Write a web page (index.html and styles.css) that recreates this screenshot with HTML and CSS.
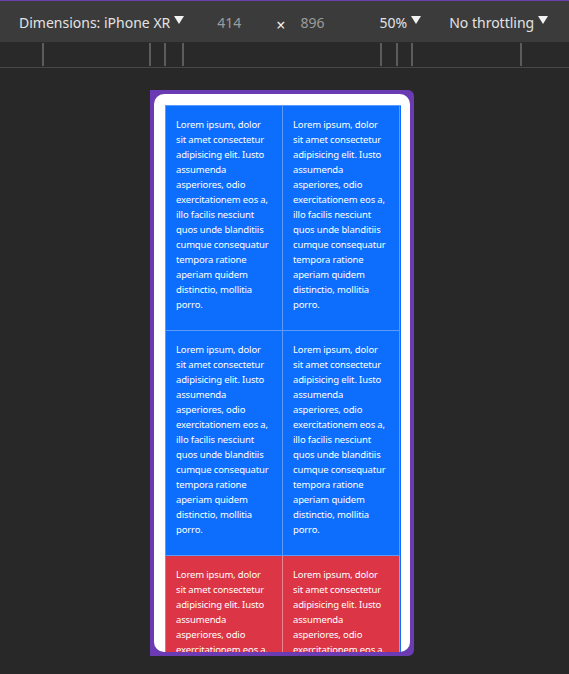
FILE: index.html
```html
<!DOCTYPE html>
<html>
<head>
<meta charset="utf-8">
<link rel="stylesheet" href="styles.css">
</head>
<body>
<div class="topline"></div>
<div class="toolbar">
  <span class="item dims">Dimensions: iPhone XR<span class="caret"></span></span>
  <span class="num w">414</span>
  <span class="times">×</span>
  <span class="num h">896</span>
  <span class="item zoom">50%<span class="caret"></span></span>
  <span class="item throttle">No throttling<span class="caret"></span></span>
</div>
<div class="ruler">
  <i class="mark" style="left:42px"></i>
  <i class="mark" style="left:149px"></i>
  <i class="mark" style="left:164px"></i>
  <i class="mark" style="left:182px"></i>
  <i class="mark" style="left:380px"></i>
  <i class="mark" style="left:396px"></i>
  <i class="mark" style="left:411px"></i>
  <i class="mark" style="left:520px"></i>
</div>
<div class="stage">
  <div class="device">
    <div class="screen">
      <div class="grid">
        <div class="cell blue"><p>Lorem ipsum, dolor<br>sit amet consectetur<br>adipisicing elit. Iusto<br>assumenda<br>asperiores, odio<br>exercitationem eos a,<br>illo facilis nesciunt<br>quos unde blanditiis<br>cumque consequatur<br>tempora ratione<br>aperiam quidem<br>distinctio, mollitia<br>porro.</p></div>
        <div class="cell blue"><p>Lorem ipsum, dolor<br>sit amet consectetur<br>adipisicing elit. Iusto<br>assumenda<br>asperiores, odio<br>exercitationem eos a,<br>illo facilis nesciunt<br>quos unde blanditiis<br>cumque consequatur<br>tempora ratione<br>aperiam quidem<br>distinctio, mollitia<br>porro.</p></div>
        <div class="cell blue"><p>Lorem ipsum, dolor<br>sit amet consectetur<br>adipisicing elit. Iusto<br>assumenda<br>asperiores, odio<br>exercitationem eos a,<br>illo facilis nesciunt<br>quos unde blanditiis<br>cumque consequatur<br>tempora ratione<br>aperiam quidem<br>distinctio, mollitia<br>porro.</p></div>
        <div class="cell blue"><p>Lorem ipsum, dolor<br>sit amet consectetur<br>adipisicing elit. Iusto<br>assumenda<br>asperiores, odio<br>exercitationem eos a,<br>illo facilis nesciunt<br>quos unde blanditiis<br>cumque consequatur<br>tempora ratione<br>aperiam quidem<br>distinctio, mollitia<br>porro.</p></div>
        <div class="cell red"><p>Lorem ipsum, dolor<br>sit amet consectetur<br>adipisicing elit. Iusto<br>assumenda<br>asperiores, odio<br>exercitationem eos a,<br>illo facilis nesciunt<br>quos unde blanditiis<br>cumque consequatur<br>tempora ratione<br>aperiam quidem<br>distinctio, mollitia<br>porro.</p></div>
        <div class="cell red"><p>Lorem ipsum, dolor<br>sit amet consectetur<br>adipisicing elit. Iusto<br>assumenda<br>asperiores, odio<br>exercitationem eos a,<br>illo facilis nesciunt<br>quos unde blanditiis<br>cumque consequatur<br>tempora ratione<br>aperiam quidem<br>distinctio, mollitia<br>porro.</p></div>
      </div>
    </div>
  </div>
</div>
</body>
</html>
```

FILE: styles.css
```css
html, body {
  margin: 0;
  padding: 0;
  background: #282828;
  height: 100%;
  overflow: hidden;
}
body {
  font-family: "Noto Sans", "Open Sans", sans-serif;
}
.topline {
  height: 1px;
  background: #6b3fb0;
}
.toolbar {
  height: 41px;
  box-sizing: border-box;
  padding-top: 2px;
  background: #3b3b3b;
  display: flex;
  align-items: center;
  font-size: 14px;
  color: #e3e3e3;
  white-space: nowrap;
}
.toolbar > span {
  display: flex;
  align-items: center;
}
.dims { margin-left: 19px; }
.num { color: #9b9b9b; }
.w { margin-left: 33px; }
.times { margin-left: 35px; color: #f0f0f0; font-size: 16px; margin-top: 4px; }
.h { margin-left: 15px; }
.zoom { margin-left: 55px; }
.throttle { margin-left: 28px; }
.caret {
  display: inline-block;
  width: 0;
  height: 0;
  border-left: 5px solid transparent;
  border-right: 5px solid transparent;
  border-top: 8px solid #f2f2f2;
  margin-left: 4px;
  margin-top: -5px;
}
.ruler {
  height: 25px;
  background: #292929;
  border-bottom: 1px solid #474747;
  position: relative;
}
.mark {
  position: absolute;
  top: 1px;
  bottom: 1px;
  width: 2px;
  background: #5c5c5c;
}
.stage {
  padding: 22px 0 0 150px;
}
.device {
  width: 256px;
  height: 558px;
  padding: 4px;
  background: #6a3bb3;
  border-radius: 0 6px 6px 0;
}
.screen {
  height: 558px;
  background: #ffffff;
  border-radius: 10px;
  overflow: hidden;
  padding: 11px;
  box-sizing: border-box;
}
.grid {
  display: grid;
  grid-template-columns: 117px 117px;
  width: 235px;
  border-left: 1px solid #5b9cfb;
  border-top: 1px solid #5b9cfb;
  background: #0d6efd;
}
.cell {
  padding: 11px 9px 10px 10px;
  border-right: 1px solid;
  border-bottom: 1px solid;
  color: #ffffff;
  font-size: 9.5px;
  letter-spacing: -0.15px;
  line-height: 15px;
}
.blue { background: #0d6efd; border-color: #5b9cfb; }
.red { background: #dc3545; border-color: #e88590; }
.cell p {
  margin: 0 0 8px 0;
  white-space: nowrap;
}
```
